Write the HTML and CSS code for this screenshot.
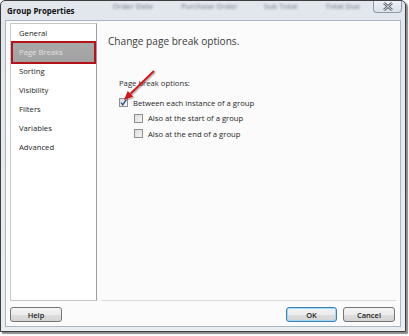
FILE: index.html
```html
<html>
<head>
  <title>Group Properties</title>
  <link rel="stylesheet" href="styles.css">
</head>
<body>
  <div class="ventana">
    <div class="barra">
      <span class="titulo">Group Properties</span>
      <span class="fondo f1">Order Date</span>
      <span class="fondo f2">Purchase Order</span>
      <span class="fondo f3">Sub Total</span>
      <span class="fondo f4">Total Due</span>
      <span class="cerrar">
        <svg width="12" height="9" viewBox="0 0 12 9">
          <path d="M2 1 L10 8 M10 1 L2 8" stroke="#5d6470" stroke-width="2.6" />
          <path d="M2 1 L10 8 M10 1 L2 8" stroke="#e9edf2" stroke-width="0.9" />
        </svg>
      </span>
    </div>

    <div class="cliente">
      <div class="cuerpo">
        <ul class="lista">
          <li>General</li>
          <li class="sel">Page Breaks</li>
          <li>Sorting</li>
          <li>Visibility</li>
          <li>Filters</li>
          <li>Variables</li>
          <li>Advanced</li>
        </ul>
        <div class="panel">
          <div class="encabezado">Change page break options.</div>
          <div class="grupo">Page break options:</div>
          <div class="opcion">
            <span class="caja">
              <svg width="9" height="9" viewBox="0 0 9 9">
                <path d="M2 4.6 L3.8 6.8 L7.2 1.6" fill="none" stroke="#2a4a8c" stroke-width="1.3" />
              </svg>
            </span>
            Between each instance of a group
          </div>
          <div class="opcion sub"><span class="caja"></span>Also at the start of a group</div>
          <div class="opcion sub"><span class="caja"></span>Also at the end of a group</div>
        </div>
      </div>
      <div class="botones">
        <button>Help</button>
        <span class="relleno"></span>
        <button class="defecto">OK</button>
        <button>Cancel</button>
      </div>
    </div>

    <!-- flecha roja sobre la casilla -->
    <svg class="flecha" width="45" height="40" viewBox="0 0 45 40">
      <g transform="translate(1.3 1.3)" opacity="0.35">
        <path d="M38 4 L14.5 26.7" stroke="#555" stroke-width="2" />
        <path d="M8 33 L17.3 29.6 L11.7 23.9 Z" fill="#555" />
      </g>
      <path d="M38 4 L14.5 26.7" stroke="#d3141a" stroke-width="2" />
      <path d="M8 33 L17.3 29.6 L11.7 23.9 Z" fill="#d3141a" />
    </svg>
  </div>
</body>
</html>
```

FILE: styles.css
```css
body {
  margin: 0;
  background: #ffffff;
  font-family: "Open Sans", "Noto Sans", sans-serif;
  font-size: 7.7px;
  color: #1e1e1e;
}

.ventana {
  position: relative;
  width: 406px;
  box-sizing: border-box;
  border: 1px solid #3d3d3d;
  border-radius: 5px 5px 0 0;
  background: linear-gradient(#e2e7ed, #e9eef3);
  box-shadow: 2px 2px 1px rgba(0, 0, 0, 0.45);
  padding-bottom: 4px;
}

.barra {
  height: 19px;
  display: flex;
  align-items: center;
  overflow: hidden;
}

.titulo {
  padding-left: 6px;
  font-size: 7.9px;
  font-weight: bold;
  color: #111;
  white-space: nowrap;
}

.fondo {
  align-self: flex-start;
  margin-top: 0;
  color: #4f5a6a;
  font-size: 7.5px;
  font-weight: 600;
  filter: blur(1.2px);
  opacity: 0.6;
  white-space: nowrap;
}
.f1 { margin-left: 38px; }
.f2 { margin-left: 28px; }
.f3 { margin-left: 26px; }
.f4 { margin-left: 28px; }

.cerrar {
  margin-left: auto;
  margin-right: 3px;
  align-self: flex-start;
  width: 29px;
  height: 12px;
  box-sizing: border-box;
  border: 1px solid #8f9aa6;
  border-top: none;
  border-radius: 0 0 4px 4px;
  background: linear-gradient(#eef2f6, #d9e0e8);
  display: flex;
  justify-content: center;
  align-items: center;
}

.cliente {
  margin: 0 4px;
  border: 1px solid #aab5c1;
  background: #fbfbfb;
  padding: 2px 4px 4px 4px;
}

.cuerpo {
  display: flex;
  height: 278px;
}

.lista {
  list-style: none;
  margin: 0;
  padding: 0;
  width: 87px;
  box-sizing: border-box;
  border: 1px solid #c6c6c6;
  border-right-color: #9d9da6;
  background: #ffffff;
}

.lista li {
  height: 19px;
  line-height: 19px;
  margin: 0 2px 0 2px;
  padding-left: 6px;
  color: #1e1e1e;
}

.lista li.sel {
  background: linear-gradient(#a9a9a9, #a2a2a2);
  color: #e2e2e2;
  outline: 2px solid #b5121b;
}

.panel {
  flex: 1;
  margin-left: 4px;
  padding-left: 7px;
  border-bottom: 1px solid #dadada;
}

.encabezado {
  margin-top: 10px;
  font-size: 10.1px;
  line-height: 16px;
  color: #3a3a3a;
}

.grupo {
  margin: 28px 0 0 11px;
  line-height: 12px;
  color: #2b2b2b;
}

.opcion {
  display: flex;
  align-items: center;
  height: 15.5px;
  margin-left: 11px;
  color: #1e1e1e;
}
.grupo + .opcion { margin-top: 6px; }

.opcion.sub {
  margin-left: 26px;
}

.caja {
  width: 9px;
  height: 9px;
  box-sizing: border-box;
  border: 1px solid #8e8f8f;
  background: linear-gradient(135deg, #dcdcdc, #f6f6f6);
  margin-right: 5px;
  display: flex;
}
.caja svg { margin: -1px; }

.botones {
  display: flex;
  gap: 6px;
  margin-top: 6px;
  padding-right: 1px;
}

.relleno {
  flex: 1;
}

button {
  width: 52px;
  height: 15px;
  padding: 0;
  border: 1px solid #757575;
  border-radius: 3px;
  background: linear-gradient(#f3f3f3 0%, #ececec 50%, #dedede 51%, #d4d4d4 100%);
  font-family: "Open Sans", "Noto Sans", sans-serif;
  font-size: 7.5px;
  font-weight: 600;
  color: #222;
}

button.defecto {
  width: 51px;
  border-color: #3c7fb1;
  box-shadow: inset 0 0 0 1px #9fd9f5;
}

.flecha {
  position: absolute;
  left: 115px;
  top: 66px;
}
```
